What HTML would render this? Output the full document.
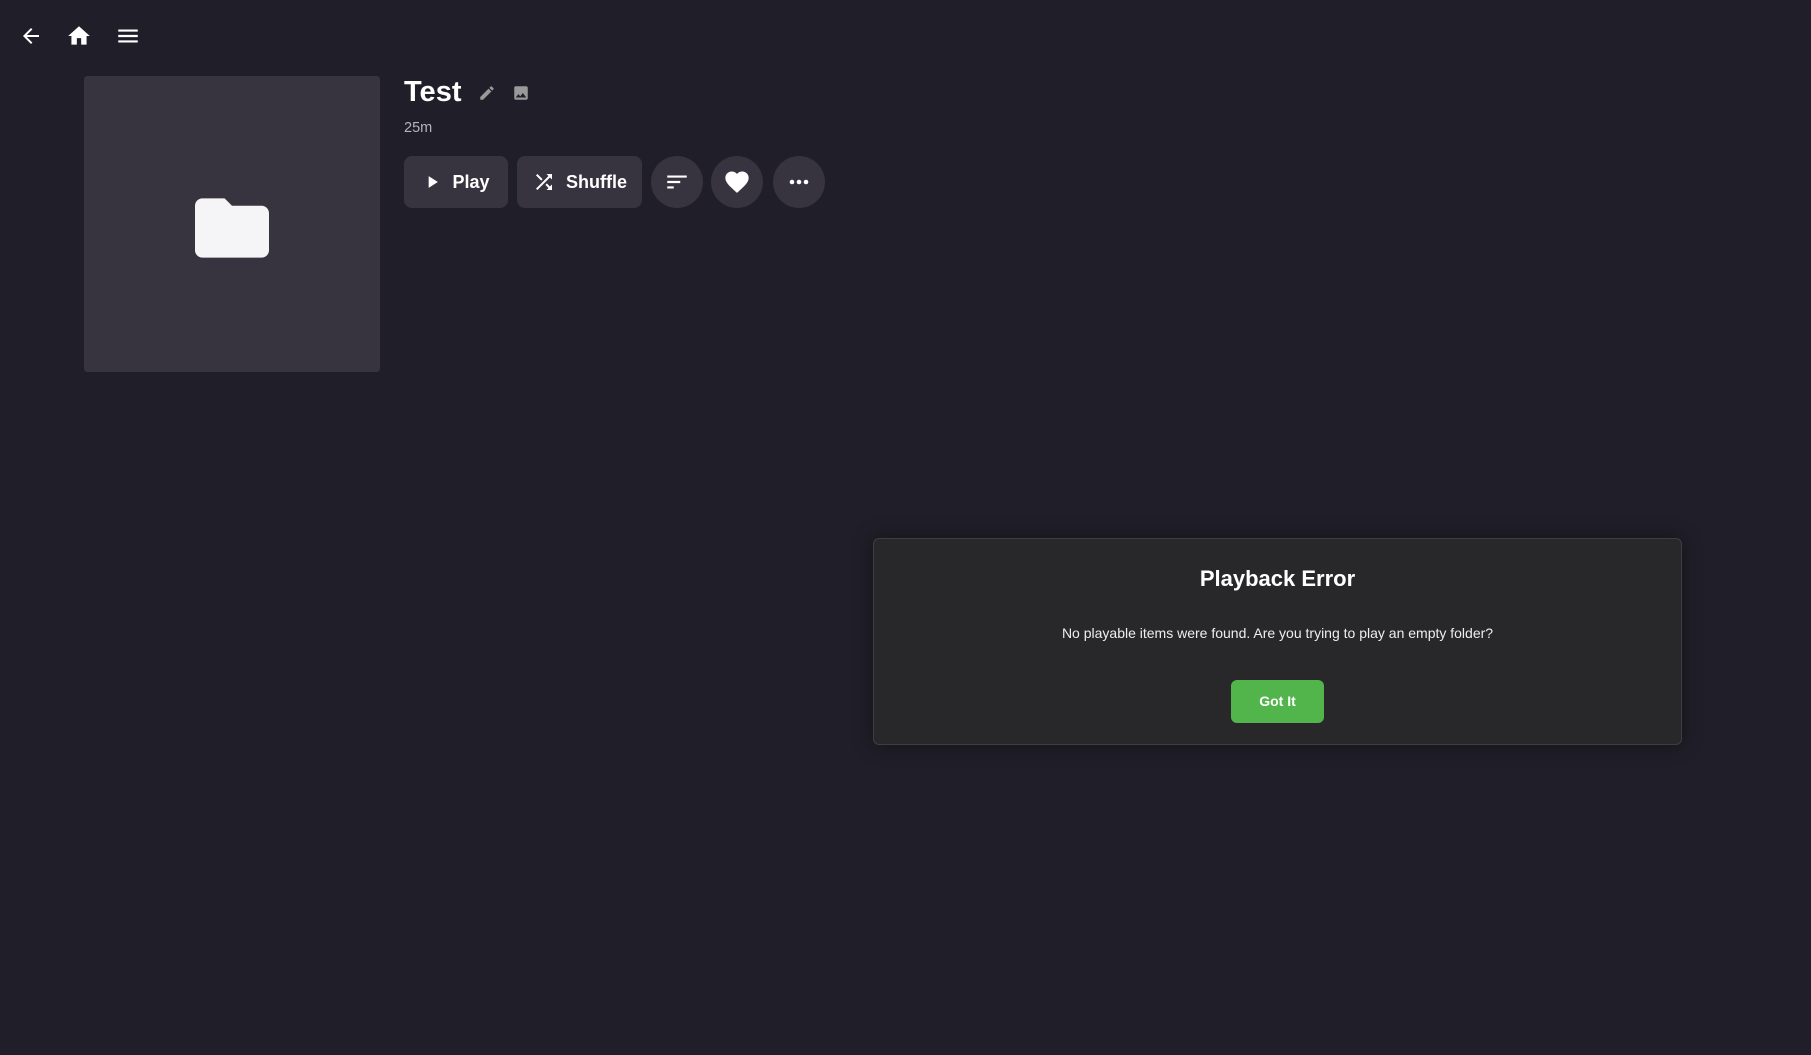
<!DOCTYPE html>
<html><head><meta charset="utf-8"><style>
*{margin:0;padding:0;box-sizing:border-box}
body{width:1811px;height:1055px;background:#201e28;font-family:"Liberation Sans",sans-serif;color:#fff;position:relative;overflow:hidden}
.a{position:absolute}
.btn{position:absolute;top:156px;height:52px;background:#37333f;border-radius:8px;display:flex;align-items:center;justify-content:center;font-weight:bold;font-size:18px;gap:10px}
.circ{border-radius:50%;width:52px}
</style></head><body>
<svg class="a" style="left:19px;top:24px" width="24" height="24" viewBox="0 0 24 24"><path fill="#fff" d="M20 11H7.83l5.59-5.59L12 4l-8 8 8 8 1.41-1.41L7.83 13H20v-2z"/></svg>
<svg class="a" style="left:66px;top:23px" width="26" height="26" viewBox="0 0 24 24"><path fill="#fff" d="M10 20v-6h4v6h5v-8h3L12 3 2 12h3v8z"/></svg>
<svg class="a" style="left:115px;top:23px" width="26" height="26" viewBox="0 0 24 24"><path fill="#fff" d="M3 18h18v-2H3v2zm0-5h18v-2H3v2zm0-7v2h18V6H3z"/></svg>
<div class="a" style="left:84px;top:76px;width:296px;height:296px;background:#38343f;border-radius:3px"></div>
<svg class="a" style="left:195px;top:191px" width="74" height="74" viewBox="2 3 20 18"><path fill="#f5f5f7" d="M10 4H4c-1.1 0-2 .9-2 2v12c0 1.1.9 2 2 2h16c1.1 0 2-.9 2-2V8c0-1.1-.9-2-2-2h-8l-2-2z"/></svg>
<div class="a" style="left:404px;top:76px;font-size:29px;font-weight:bold">Test</div>
<svg class="a" style="left:478px;top:84px" width="18" height="18" viewBox="0 0 24 24"><path fill="#999" d="M3 17.25V21h3.75L17.81 9.94l-3.75-3.75L3 17.25zM20.71 7.04a1 1 0 000-1.41l-2.34-2.34a1 1 0 00-1.41 0l-1.83 1.83 3.75 3.75 1.83-1.83z"/></svg>
<svg class="a" style="left:512px;top:84px" width="18" height="18" viewBox="0 0 24 24"><path fill="#999" d="M21 19V5c0-1.1-.9-2-2-2H5c-1.1 0-2 .9-2 2v14c0 1.1.9 2 2 2h14c1.1 0 2-.9 2-2zM8.5 13.5l2.5 3 3.5-4.5 4.5 6H5l3.5-4.5z"/></svg>
<div class="a" style="left:404px;top:120px;font-size:14.5px;color:#b5b3ba">25m</div>
<div class="btn" style="left:404px;width:104px"><svg width="20" height="20" viewBox="0 0 24 24"><path fill="#fff" d="M8 5v14l11-7z"/></svg>Play</div>
<div class="btn" style="left:517px;width:125px"><svg width="24" height="24" viewBox="0 0 24 24"><path fill="#fff" d="M10.59 9.17L5.41 4 4 5.41l5.17 5.17 1.42-1.41zM14.5 4l2.04 2.04L4 18.59 5.41 20 17.960 7.46 20 9.5V4h-5.5zm.33 9.41l-1.41 1.41 3.13 3.13L14.5 20H20v-5.5l-2.04 2.04-3.13-3.13z"/></svg>Shuffle</div>
<div class="btn circ" style="left:651px"><svg width="26" height="26" viewBox="0 0 24 24"><path fill="#fff" d="M3 18h6v-2H3v2zM3 6v2h18V6H3zm0 7h12v-2H3v2z"/></svg></div>
<div class="btn circ" style="left:711px"><svg width="28" height="28" viewBox="0 0 24 24"><path fill="#fff" d="M12 21.35l-1.45-1.32C5.4 15.360 2 12.28 2 8.5 2 5.42 4.42 3 7.5 3c1.74 0 3.41.81 4.5 2.09C13.09 3.81 14.76 3 16.5 3 19.58 3 22 5.42 22 8.5c0 3.78-3.4 6.86-8.55 11.54L12 21.35z"/></svg></div>
<div class="btn circ" style="left:773px"><svg width="24" height="24" viewBox="0 0 24 24"><circle cx="5" cy="12" r="2.3" fill="#fff"/><circle cx="12" cy="12" r="2.3" fill="#fff"/><circle cx="19" cy="12" r="2.3" fill="#fff"/></svg></div>
<div class="a" style="left:873px;top:538px;width:809px;height:207px;background:#28282b;border:1px solid #3e3e42;border-radius:6px;box-shadow:0 0 20px rgba(0,0,0,.4);text-align:center">
<div style="margin-top:27px;font-size:22px;font-weight:bold">Playback Error</div>
<div style="margin-top:33px;font-size:14px;color:#eee">No playable items were found. Are you trying to play an empty folder?</div>
<div style="margin:39px auto 0;width:93px;height:43px;background:#52b54b;border-radius:6px;font-size:14px;font-weight:bold;line-height:43px">Got It</div>
</div>
</body></html>
